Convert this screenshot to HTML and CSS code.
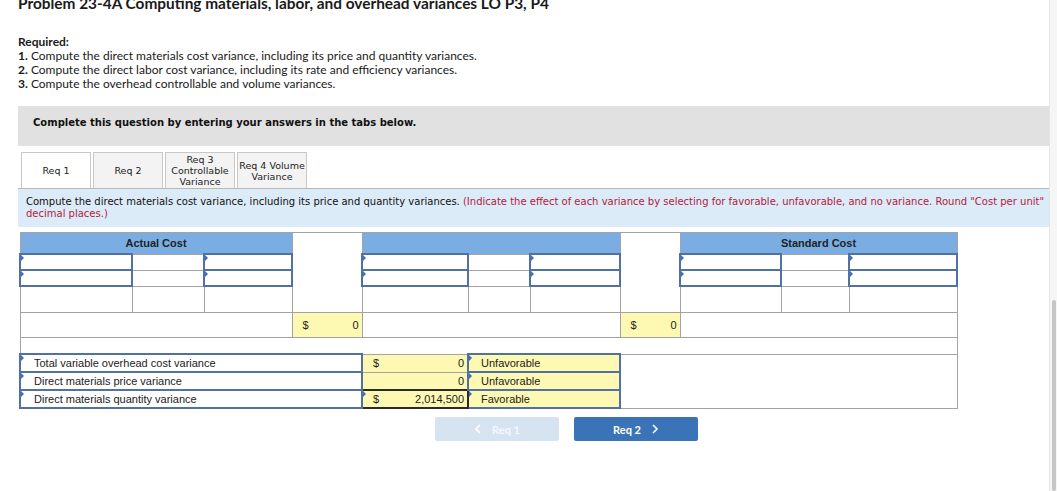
FILE: index.html
```html
<!DOCTYPE html>
<html>
<head>
	<title>Problem 23-4A</title>
	<link rel="stylesheet" href="styles.css">
</head>
<body>
	<div class="page">
		<h1 class="title">Problem 23-4A Computing materials, labor, and overhead variances LO P3, P4</h1>

		<div class="required">
			<strong>Required:</strong><br>
			<strong>1.</strong> Compute the direct materials cost variance, including its price and quantity variances.<br>
			<strong>2.</strong> Compute the direct labor cost variance, including its rate and efficiency variances.<br>
			<strong>3.</strong> Compute the overhead controllable and volume variances.
		</div>

		<div class="notice">Complete this question by entering your answers in the tabs below.</div>

		<!-- tabs -->
		<div class="tabs">
			<div class="tab active"><span>Req 1</span></div>
			<div class="tab"><span>Req 2</span></div>
			<div class="tab"><span>Req 3<br>Controllable<br>Variance</span></div>
			<div class="tab"><span><span class="nowrap">Req 4 Volume</span><br>Variance</span></div>
		</div>

		<div class="info">
			Compute the direct materials cost variance, including its price and quantity variances. <span class="hint">(Indicate the effect of each variance by selecting for favorable, unfavorable, and no variance. Round "Cost per unit" decimal places.)</span>
		</div>

		<table class="grid">
			<colgroup>
				<col style="width:112px"><col style="width:72px"><col style="width:88px">
				<col style="width:70px">
				<col style="width:106px"><col style="width:62px"><col style="width:90px">
				<col style="width:60px">
				<col style="width:101px"><col style="width:68px"><col style="width:108px">
			</colgroup>
			<tr class="r-head">
				<th colspan="3">Actual Cost</th>
				<td rowspan="4" class="blank"></td>
				<th colspan="3"></th>
				<td rowspan="4" class="blank"></td>
				<th colspan="3">Standard Cost</th>
			</tr>
			<tr class="r-in">
				<td class="inp"></td><td></td><td class="inp"></td>
				<td class="inp"></td><td></td><td class="inp"></td>
				<td class="inp"></td><td></td><td class="inp"></td>
			</tr>
			<tr class="r-in">
				<td class="inp"></td><td></td><td class="inp"></td>
				<td class="inp"></td><td></td><td class="inp"></td>
				<td class="inp"></td><td></td><td class="inp"></td>
			</tr>
			<tr class="r-empty">
				<td></td><td></td><td></td>
				<td></td><td></td><td></td>
				<td></td><td></td><td></td>
			</tr>
			<tr class="r-total">
				<td colspan="3"></td>
				<td class="amt"><span class="cur">$</span><span>0</span></td>
				<td colspan="3"></td>
				<td class="amt"><span class="cur">$</span><span>0</span></td>
				<td colspan="3"></td>
			</tr>
			<tr class="r-spacer"><td colspan="11"></td></tr>
			<tr class="r-var">
				<td colspan="4" class="inp label">Total variable overhead cost variance</td>
				<td class="amt"><span class="cur">$</span><span>0</span></td>
				<td colspan="2" class="inp effect">Unfavorable</td>
				<td colspan="4" rowspan="3"></td>
			</tr>
			<tr class="r-var">
				<td colspan="4" class="inp label">Direct materials price variance</td>
				<td class="amt"><span class="cur"></span><span>0</span></td>
				<td colspan="2" class="inp effect">Unfavorable</td>
			</tr>
			<tr class="r-var">
				<td colspan="4" class="inp label">Direct materials quantity variance</td>
				<td class="amt inp dark"><span class="cur">$</span><span>2,014,500</span></td>
				<td colspan="2" class="inp effect">Favorable</td>
			</tr>
		</table>

		<div class="nav">
			<button class="btn prev">
				<svg width="8" height="10" viewBox="0 0 8 10"><polyline points="6,1 2,5 6,9" fill="none" stroke="#fff" stroke-width="1.6"/></svg>
				Req 1
			</button>
			<button class="btn next">
				Req 2
				<svg width="8" height="10" viewBox="0 0 8 10"><polyline points="2,1 6,5 2,9" fill="none" stroke="#fff" stroke-width="1.6"/></svg>
			</button>
		</div>
	</div>

	<div class="scrollbar"><div class="thumb"></div></div>
</body>
</html>
```

FILE: styles.css
```css
body {
	margin: 0;
	background-color: #fff;
	color: #1a1a1a;
	font-family: "Lato", "Liberation Sans", sans-serif;
	overflow: hidden;
}

.page {
	width: 1032px;
	padding-left: 18px;
}

.title {
	font-size: 15.4px;
	line-height: 18px;
	margin: -6px 0 0 0;
	color: #1a1a1a;
}

.required {
	margin-top: 23px;
	font-size: 12px;
	line-height: 14px;
}

.notice {
	margin-top: 15px;
	height: 40px;
	box-sizing: border-box;
	padding: 11px 0 0 15px;
	background-color: #e1e1e1;
	font-family: "DejaVu Sans", Verdana, sans-serif;
	font-size: 10px;
	font-weight: bold;
	color: #111;
}

.tabs {
	display: flex;
	gap: 2px;
	margin-top: 6px;
	padding-left: 3px;
	height: 36px;
}

.tab {
	flex: none;
	width: 70px;
	height: 36px;
	box-sizing: border-box;
	border: 1px solid #c8c8c8;
	border-bottom: none;
	background-color: #f3f3f3;
	display: flex;
	align-items: center;
	justify-content: center;
	text-align: center;
	font-family: "DejaVu Sans", Verdana, sans-serif;
	font-size: 9.5px;
	line-height: 11px;
	color: #222;
}

.tab.active {
	background-color: #fff;
}

.nowrap {
	white-space: nowrap;
}

.info {
	height: 39px;
	box-sizing: border-box;
	border-top: 1px solid #b8b8b8;
	background-color: #dcebf8;
	padding: 7px 0 0 8px;
	font-family: "DejaVu Sans", Verdana, sans-serif;
	font-size: 10px;
	line-height: 12px;
	color: #111;
}

.hint {
	color: #b3213b;
}

.grid {
	margin: 5px 0 0 1px;
	width: 937px;
	table-layout: fixed;
	border-collapse: collapse;
	font-family: "Liberation Sans", Arial, sans-serif;
	font-size: 11px;
	color: #222;
}

.grid td, .grid th {
	border: 1px solid #a3a3a3;
	padding: 0;
}

.grid th {
	background-color: #7aaee2;
	font-weight: bold;
	height: 20px;
}

.grid .blank {
	background-color: #fff;
}

.r-in td { height: 14px; }
.r-empty td { height: 25px; }
.r-total td { height: 24px; }
.r-spacer td { height: 15px; }
.r-var td { height: 16px; }

.grid td.inp {
	border: 2px solid #5271a3;
	position: relative;
}

.grid td.inp::before {
	content: "";
	position: absolute;
	left: 0;
	top: 0;
	border-top: 3px solid transparent;
	border-bottom: 3px solid transparent;
	border-left: 3px solid #3d6fc4;
}

.grid td.amt {
	background-color: #fdf9b3;
	padding: 0 3px 0 10px;
}

.grid td.amt span:last-child {
	float: right;
}

.cur {
	float: left;
}

.grid td.dark {
	border: 2px solid #2b2b2b;
	border-left-color: #5271a3;
}

.grid td.label {
	padding-left: 13px;
}

.grid td.effect {
	background-color: #fdf9b3;
	padding-left: 12px;
}

.nav {
	display: flex;
	gap: 15px;
	margin-top: 8px;
	padding-left: 417px;
}

.btn {
	width: 124px;
	height: 24px;
	border: none;
	border-radius: 2px;
	display: flex;
	align-items: center;
	justify-content: center;
	gap: 10px;
	font-family: "Lato", "Liberation Sans", sans-serif;
	font-size: 11px;
	font-weight: bold;
	color: #fff;
}

.prev {
	background-color: #d6e3f1;
	color: #f4f8fc;
}

.next {
	background-color: #3b73b9;
}

.scrollbar {
	position: fixed;
	top: 0;
	right: 0;
	width: 7px;
	height: 100%;
	background-color: #f6f6f6;
	border-left: 1px solid #e6e6e6;
}

.thumb {
	margin-top: 300px;
	margin-left: 2px;
	width: 4px;
	height: 191px;
	border-radius: 2px;
	background-color: #c6c6c6;
}
```
